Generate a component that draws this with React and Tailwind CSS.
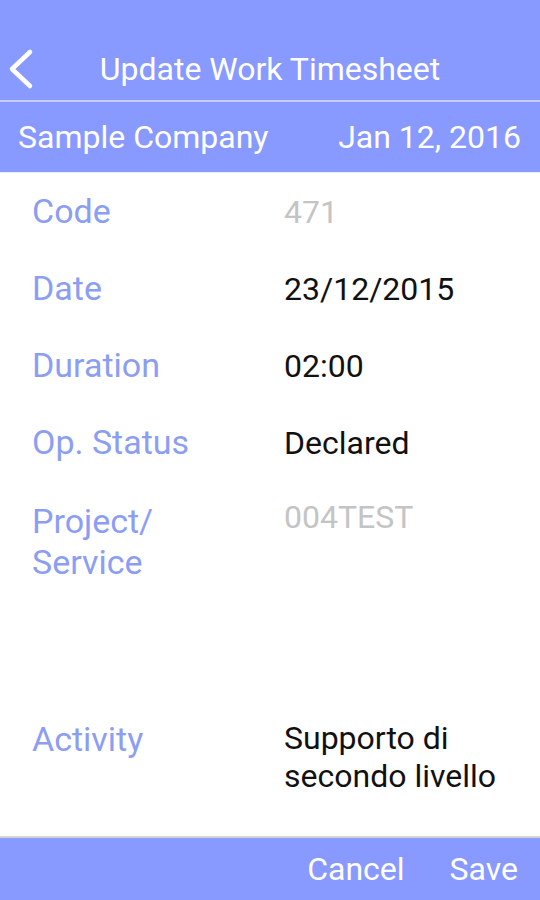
import React from "react";

const rows = [
  { label: "Code", value: "471", muted: true },
  { label: "Date", value: "23/12/2015" },
  { label: "Duration", value: "02:00" },
  { label: "Op. Status", value: "Declared" },
];

const App = () => {
  return (
    <div
      className="w-[540px] h-[900px] bg-white flex flex-col overflow-hidden"
      style={{ fontFamily: "Roboto, 'Noto Sans', sans-serif" }}
    >
      {/* top bar */}
      <div className="bg-[#8899ff] h-[100px] relative flex items-end">
        <div className="h-[60px] pb-[2px] w-full flex items-center justify-center">
          <span className="text-white text-[32px] leading-none">
            Update Work Timesheet
          </span>
        </div>
        <svg
          className="absolute left-[6px] top-[48px]"
          width="30"
          height="42"
          viewBox="0 0 30 42"
          fill="none"
        >
          <path
            d="M24 4 L6 21 L24 38"
            stroke="white"
            strokeWidth="4.5"
            strokeLinecap="round"
            strokeLinejoin="round"
          />
        </svg>
      </div>
      <div className="h-[2px] bg-[#c5cdff]" />

      {/* company / date */}
      <div className="bg-[#8899ff] h-[70px] flex items-center justify-between pl-[18px] pr-[19px] text-white text-[32px]">
        <span>Sample Company</span>
        <span>Jan 12, 2016</span>
      </div>
      <div className="h-[1px] bg-[#e8ebff]" />

      {/* form */}
      <div className="flex-1 pl-[32px]">
        {rows.map((row, i) => (
          <div key={i} className="h-[77px] flex items-center">
            <div className="w-[252px] text-[34px] text-[#8c9ef4]">
              {row.label}
            </div>
            <div
              className={
                row.muted
                  ? "text-[32px] text-[#c4c4c4]"
                  : "text-[32px] text-[#111111]"
              }
            >
              {row.value}
            </div>
          </div>
        ))}

        <div className="h-[219px] flex items-start pt-[20px]">
          <div className="w-[252px] text-[34px] leading-[41px] text-[#8c9ef4]">
            Project/
            <br />
            Service
          </div>
          <div className="text-[32px] leading-[32px] text-[#c4c4c4]">
            004TEST
          </div>
        </div>

        <div className="flex items-start pt-[19px]">
          <div className="w-[252px] text-[34px] leading-[40px] text-[#8c9ef4]">
            Activity
          </div>
          <div className="text-[32px] leading-[38px] text-[#111111]">
            Supporto di
            <br />
            secondo livello
          </div>
        </div>
      </div>

      {/* bottom bar */}
      <div className="h-[2px] bg-[#d4d4d4]" />
      <div className="bg-[#8899ff] h-[62px] flex items-center justify-end gap-[45px] pr-[22px] text-white text-[32px]">
        <span>Cancel</span>
        <span>Save</span>
      </div>
    </div>
  );
};

export default App;
